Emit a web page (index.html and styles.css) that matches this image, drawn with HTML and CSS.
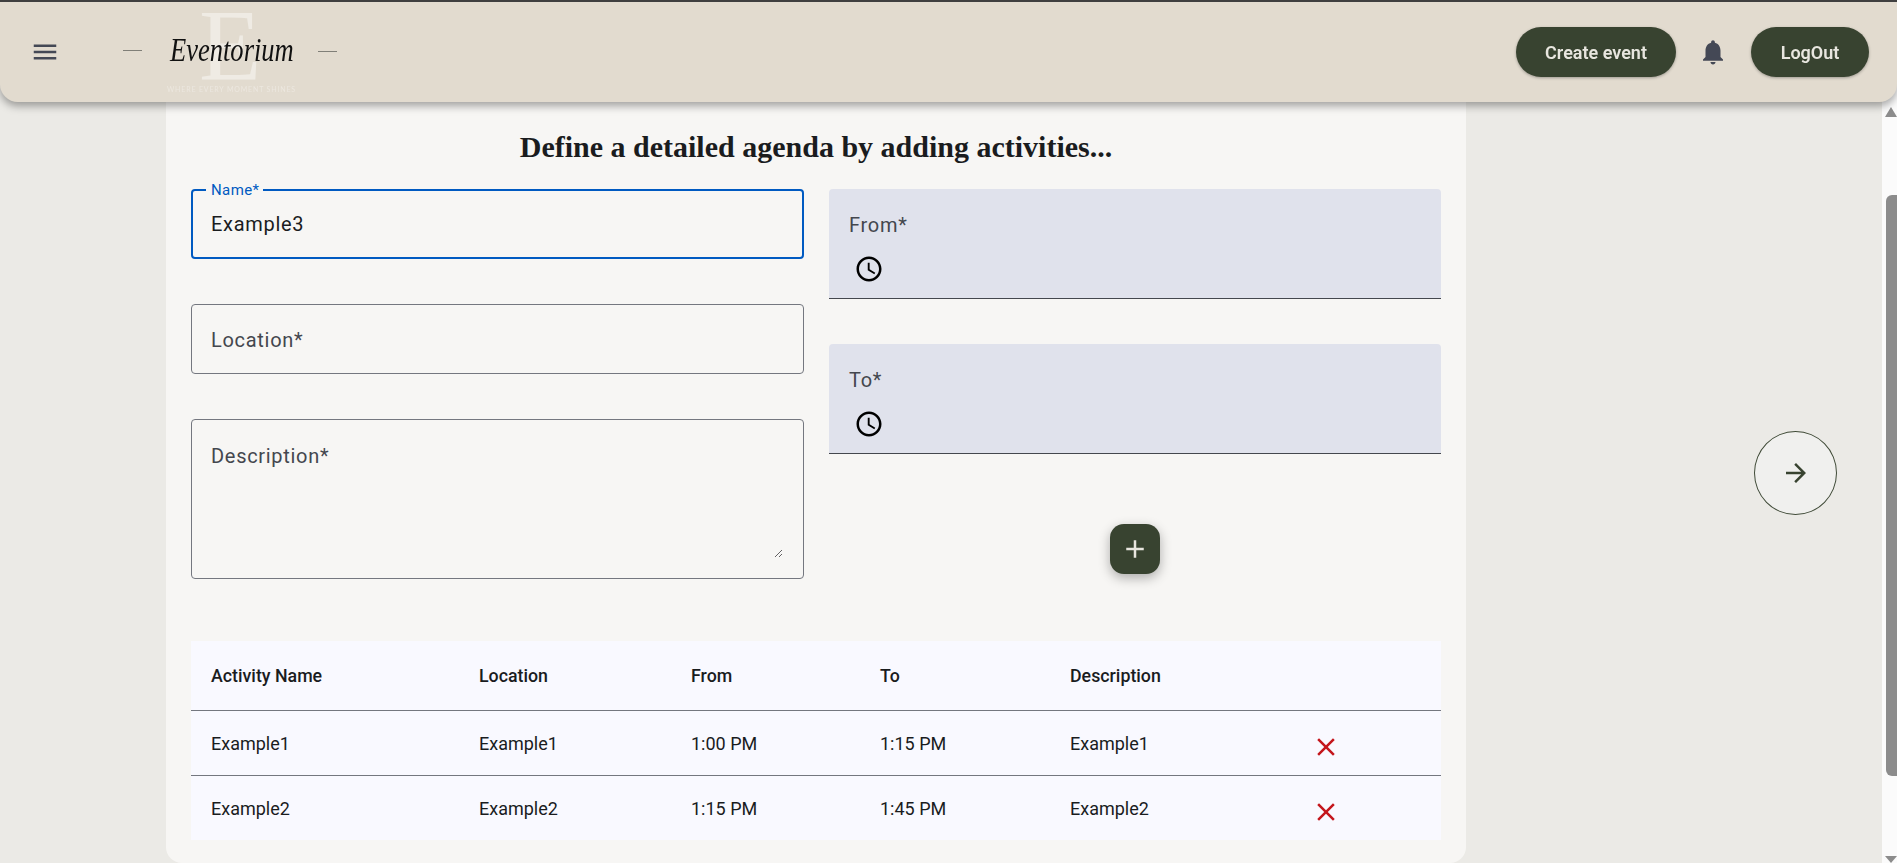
FILE: index.html

```html
<!DOCTYPE html>
<html lang="en">
<head>
    <meta charset="UTF-8">
    <title>Eventorium</title>
    <link rel="stylesheet" href="styles.css">
</head>
<body>
    <header class="topbar">
        <svg class="icon menu-icon" viewBox="0 0 24 24"><path d="M3 18h18v-2H3v2zm0-5h18v-2H3v2zm0-7v2h18V6H3z"/></svg>
        <div class="logo">
            <span class="logo-watermark">E</span>
            <span class="logo-dash"></span>
            <span class="logo-name">Eventorium</span>
            <span class="logo-dash logo-dash-right"></span>
            <span class="logo-tagline">WHERE EVERY MOMENT SHINES</span>
        </div>
        <div class="topbar-actions">
            <button class="pill create-btn">Create event</button>
            <svg class="icon bell-icon" viewBox="0 0 24 24"><path d="M12 22c1.1 0 2-.9 2-2h-4c0 1.1.89 2 2 2zm6-6v-5c0-3.07-1.64-5.64-4.5-6.32V4c0-.83-.67-1.5-1.5-1.5s-1.5.67-1.5 1.5v.68C7.63 5.36 6 7.92 6 11v5l-2 2v1h16v-1l-2-2z"/></svg>
            <button class="pill logout-btn">LogOut</button>
        </div>
    </header>

    <div class="page">
        <main class="panel">
            <h2 class="panel-title">Define a detailed agenda by adding activities...</h2>

            <div class="form-grid">
                <div class="form-col">
                    <div class="outlined focused">
                        <label class="float-label">Name*</label>
                        <input class="text-input" type="text" value="Example3">
                    </div>
                    <div class="outlined">
                        <input class="text-input" type="text" placeholder="Location*">
                    </div>
                    <div class="outlined outlined-area">
                        <textarea class="text-area" placeholder="Description*"></textarea>
                    </div>
                </div>
                <div class="form-col form-col-right">
                    <div class="filled">
                        <span class="filled-label">From*</span>
                        <svg class="icon clock-icon" viewBox="0 0 24 24"><path d="M11.99 2C6.47 2 2 6.48 2 12s4.47 10 9.99 10C17.52 22 22 17.52 22 12S17.52 2 11.99 2zM12 20c-4.42 0-8-3.58-8-8s3.58-8 8-8 8 3.58 8 8-3.58 8-8 8zm.5-13H11v6l5.25 3.15.75-1.23-4.5-2.67z"/></svg>
                    </div>
                    <div class="filled">
                        <span class="filled-label">To*</span>
                        <svg class="icon clock-icon" viewBox="0 0 24 24"><path d="M11.99 2C6.47 2 2 6.48 2 12s4.47 10 9.99 10C17.52 22 22 17.52 22 12S17.52 2 11.99 2zM12 20c-4.42 0-8-3.58-8-8s3.58-8 8-8 8 3.58 8 8-3.58 8-8 8zm.5-13H11v6l5.25 3.15.75-1.23-4.5-2.67z"/></svg>
                    </div>
                    <button class="add-btn">
                        <svg class="icon" viewBox="0 0 24 24"><path d="M19 13h-6v6h-2v-6H5v-2h6V5h2v6h6v2z"/></svg>
                    </button>
                </div>
            </div>

            <table class="agenda">
                <colgroup>
                    <col class="col-name">
                    <col class="col-location">
                    <col class="col-from">
                    <col class="col-to">
                    <col class="col-desc">
                    <col class="col-remove">
                </colgroup>
                <thead>
                    <tr>
                        <th>Activity Name</th>
                        <th>Location</th>
                        <th>From</th>
                        <th>To</th>
                        <th>Description</th>
                        <th></th>
                    </tr>
                </thead>
                <tbody>
                    <tr>
                        <td>Example1</td>
                        <td>Example1</td>
                        <td>1:00 PM</td>
                        <td>1:15 PM</td>
                        <td>Example1</td>
                        <td class="remove-cell"><svg class="icon close-icon" viewBox="0 0 24 24"><path d="M19 6.41 17.59 5 12 10.59 6.41 5 5 6.41 10.59 12 5 17.59 6.41 19 12 13.41 17.59 19 19 17.59 13.41 12z"/></svg></td>
                    </tr>
                    <tr>
                        <td>Example2</td>
                        <td>Example2</td>
                        <td>1:15 PM</td>
                        <td>1:45 PM</td>
                        <td>Example2</td>
                        <td class="remove-cell"><svg class="icon close-icon" viewBox="0 0 24 24"><path d="M19 6.41 17.59 5 12 10.59 6.41 5 5 6.41 10.59 12 5 17.59 6.41 19 12 13.41 17.59 19 19 17.59 13.41 12z"/></svg></td>
                    </tr>
                </tbody>
            </table>
        </main>

        <div class="side">
            <button class="next-btn">
                <svg class="icon" viewBox="0 0 24 24"><path d="M12 4l-1.41 1.41L16.17 11H4v2h12.17l-5.58 5.59L12 20l8-8z"/></svg>
            </button>
        </div>
    </div>

    <div class="scrollbar">
        <span class="scroll-up"></span>
        <span class="scroll-thumb"></span>
        <span class="scroll-down"></span>
    </div>
</body>
</html>
```

FILE: styles.css

```css
* {
    box-sizing: border-box;
}
body {
    margin: 0;
    height: 100vh;
    overflow: hidden;
    display: flex;
    font-family: Roboto, sans-serif;
    background-color: #ebeae6;
    color: #1a1c1e;
}
.icon {
    display: block;
    width: 30px;
    height: 30px;
    fill: currentColor;
}

/* top bar */
.topbar {
    position: fixed;
    top: 0;
    left: 0;
    right: 0;
    z-index: 2;
    height: 102px;
    display: flex;
    align-items: center;
    padding: 0 28px 0 30px;
    background-color: #e2dbcf;
    border-top: 2px solid #3f3f3f;
    border-radius: 0 0 18px 18px;
    box-shadow: 0 4px 8px rgba(0, 0, 0, 0.35);
}
.menu-icon, .bell-icon {
    color: #444855;
}
.bell-icon {
    margin-right: 1px;
}
.logo {
    position: relative;
    display: flex;
    align-items: center;
    margin-left: 63px;
}
.logo-dash {
    width: 19px;
    height: 1px;
    margin-top: -4px;
    background-color: #807f78;
}
.logo-dash-right {
    margin-top: -2px;
}
/* the real logo is a script face, so squeeze the serif italic to its width.
   the negative margin takes back the space the squeeze leaves */
.logo-name {
    position: relative;
    margin: -4px -11px 0 28px;
    font-family: "Liberation Serif", serif;
    font-style: italic;
    font-size: 34px;
    line-height: 40px;
    white-space: nowrap;
    color: #111;
    transform: scaleX(0.78);
    transform-origin: left center;
}
.logo-watermark {
    position: absolute;
    left: 76px;
    top: -33px;
    font-family: "Liberation Serif", serif;
    font-size: 102px;
    line-height: 90px;
    color: #efebe4;
}
.logo-tagline {
    position: absolute;
    left: 44px;
    top: 50px;
    font-family: Lato, sans-serif;
    font-size: 7px;
    letter-spacing: 0.85px;
    line-height: 10px;
    white-space: nowrap;
    color: #ece7df;
}
.topbar-actions {
    margin-left: auto;
    display: flex;
    align-items: center;
    gap: 22px;
}
.pill {
    height: 50px;
    border: none;
    border-radius: 25px;
    background-color: #384330;
    color: #e8e6df;
    font-family: Roboto, sans-serif;
    font-size: 18px;
    font-weight: 600;
    box-shadow: 0 1px 3px rgba(0, 0, 0, 0.3);
}
.create-btn {
    width: 160px;
}
.logout-btn {
    width: 118px;
}

/* page */
.page {
    flex: 1;
    display: flex;
    padding-left: 166px;
}
.panel {
    width: 1300px;
    height: 863px;
    padding: 130px 25px 0;
    background-color: #f7f6f4;
    border-radius: 0 0 16px 16px;
}
.panel-title {
    margin: 0 0 25px;
    height: 34px;
    text-align: center;
    font-family: "Liberation Serif", serif;
    font-size: 30px;
    line-height: 34px;
    font-weight: bold;
    color: #1a1c1e;
}
.form-grid {
    display: grid;
    grid-template-columns: 613px 612px;
    column-gap: 25px;
}
.form-col {
    display: flex;
    flex-direction: column;
    gap: 45px;
}

/* outlined fields */
.outlined {
    position: relative;
    height: 70px;
    border: 1px solid #74777f;
    border-radius: 4px;
}
.outlined.focused {
    border: 2px solid #005ac1;
}
.outlined-area {
    height: 160px;
    padding: 24px 20px 20px 15px;
}
.float-label {
    position: absolute;
    top: -9px;
    left: 13px;
    padding: 0 4px 0 5px;
    background-color: #f7f6f4;
    font-size: 15px;
    letter-spacing: 0.4px;
    line-height: 16px;
    color: #005ac1;
}
.text-input, .text-area {
    display: block;
    width: 100%;
    height: 100%;
    padding: 2px 19px 0;
    border: none;
    outline: none;
    background: transparent;
    font-family: Roboto, sans-serif;
    font-size: 20px;
    letter-spacing: 0.7px;
    color: #1a1c1e;
}
.focused .text-input {
    padding: 0 18px;
}
.text-area {
    padding: 0 4px;
    line-height: 24px;
}
.text-input::placeholder, .text-area::placeholder {
    color: #44474e;
    opacity: 1;
}

/* filled time fields */
.filled {
    height: 110px;
    padding: 24px 20px 0;
    background-color: #e0e2ec;
    border-bottom: 1px solid #44474e;
    border-radius: 4px 4px 0 0;
}
.filled-label {
    display: block;
    height: 24px;
    font-size: 20px;
    line-height: 24px;
    letter-spacing: 0.7px;
    color: #44474e;
}
.clock-icon {
    margin: 17px 0 0 5px;
    color: #000;
}
.add-btn {
    align-self: center;
    width: 50px;
    height: 50px;
    margin-top: 25px;
    display: flex;
    align-items: center;
    justify-content: center;
    padding: 0;
    border: none;
    border-radius: 14px;
    background-color: #384330;
    color: #e8e6df;
    box-shadow: 0 4px 12px rgba(0, 0, 0, 0.3);
}

/* activities table */
.agenda {
    width: 1250px;
    margin-top: 62px;
    table-layout: fixed;
    border-collapse: collapse;
    background-color: #f9f9ff;
    font-size: 18px;
}
.col-name { width: 268px; }
.col-location { width: 212px; }
.col-from { width: 189px; }
.col-to { width: 190px; }
.col-desc { width: 244px; }
.col-remove { width: 147px; }
.agenda th {
    height: 69px;
    padding: 0 20px;
    text-align: left;
    font-size: 17.8px;
    font-weight: 500;
    border-bottom: 1px solid #74777f;
}
.agenda td {
    height: 65px;
    padding: 2px 20px 0;
}
.agenda tbody tr:first-child td {
    border-bottom: 1px solid #74777f;
}
.agenda .remove-cell {
    padding: 0 0 0 17px;
}
.close-icon {
    margin-top: 8px;
    color: #c4161c;
}

/* next arrow */
.side {
    flex: 1;
    padding: 431px 0 0 288px;
}
.next-btn {
    width: 83px;
    height: 84px;
    display: flex;
    align-items: center;
    justify-content: center;
    padding: 0;
    border: 1px solid #3f4a37;
    border-radius: 50%;
    background-color: #f0f0ee;
    color: #384330;
}

/* scrollbar */
.scrollbar {
    width: 15px;
    display: flex;
    flex-direction: column;
    align-items: flex-end;
    padding-top: 107px;
    background-color: #fbfbfb;
}
.scroll-up, .scroll-down {
    width: 0;
    height: 0;
    border-left: 6px solid transparent;
    border-right: 6px solid transparent;
}
.scroll-up {
    border-bottom: 10px solid #8c8c8c;
}
.scroll-down {
    margin-top: auto;
    border-top: 7px solid #8c8c8c;
}
.scroll-thumb {
    width: 11px;
    height: 581px;
    margin-top: 78px;
    border-radius: 6px 0 0 6px;
    background-color: #8c8c8c;
}
```
